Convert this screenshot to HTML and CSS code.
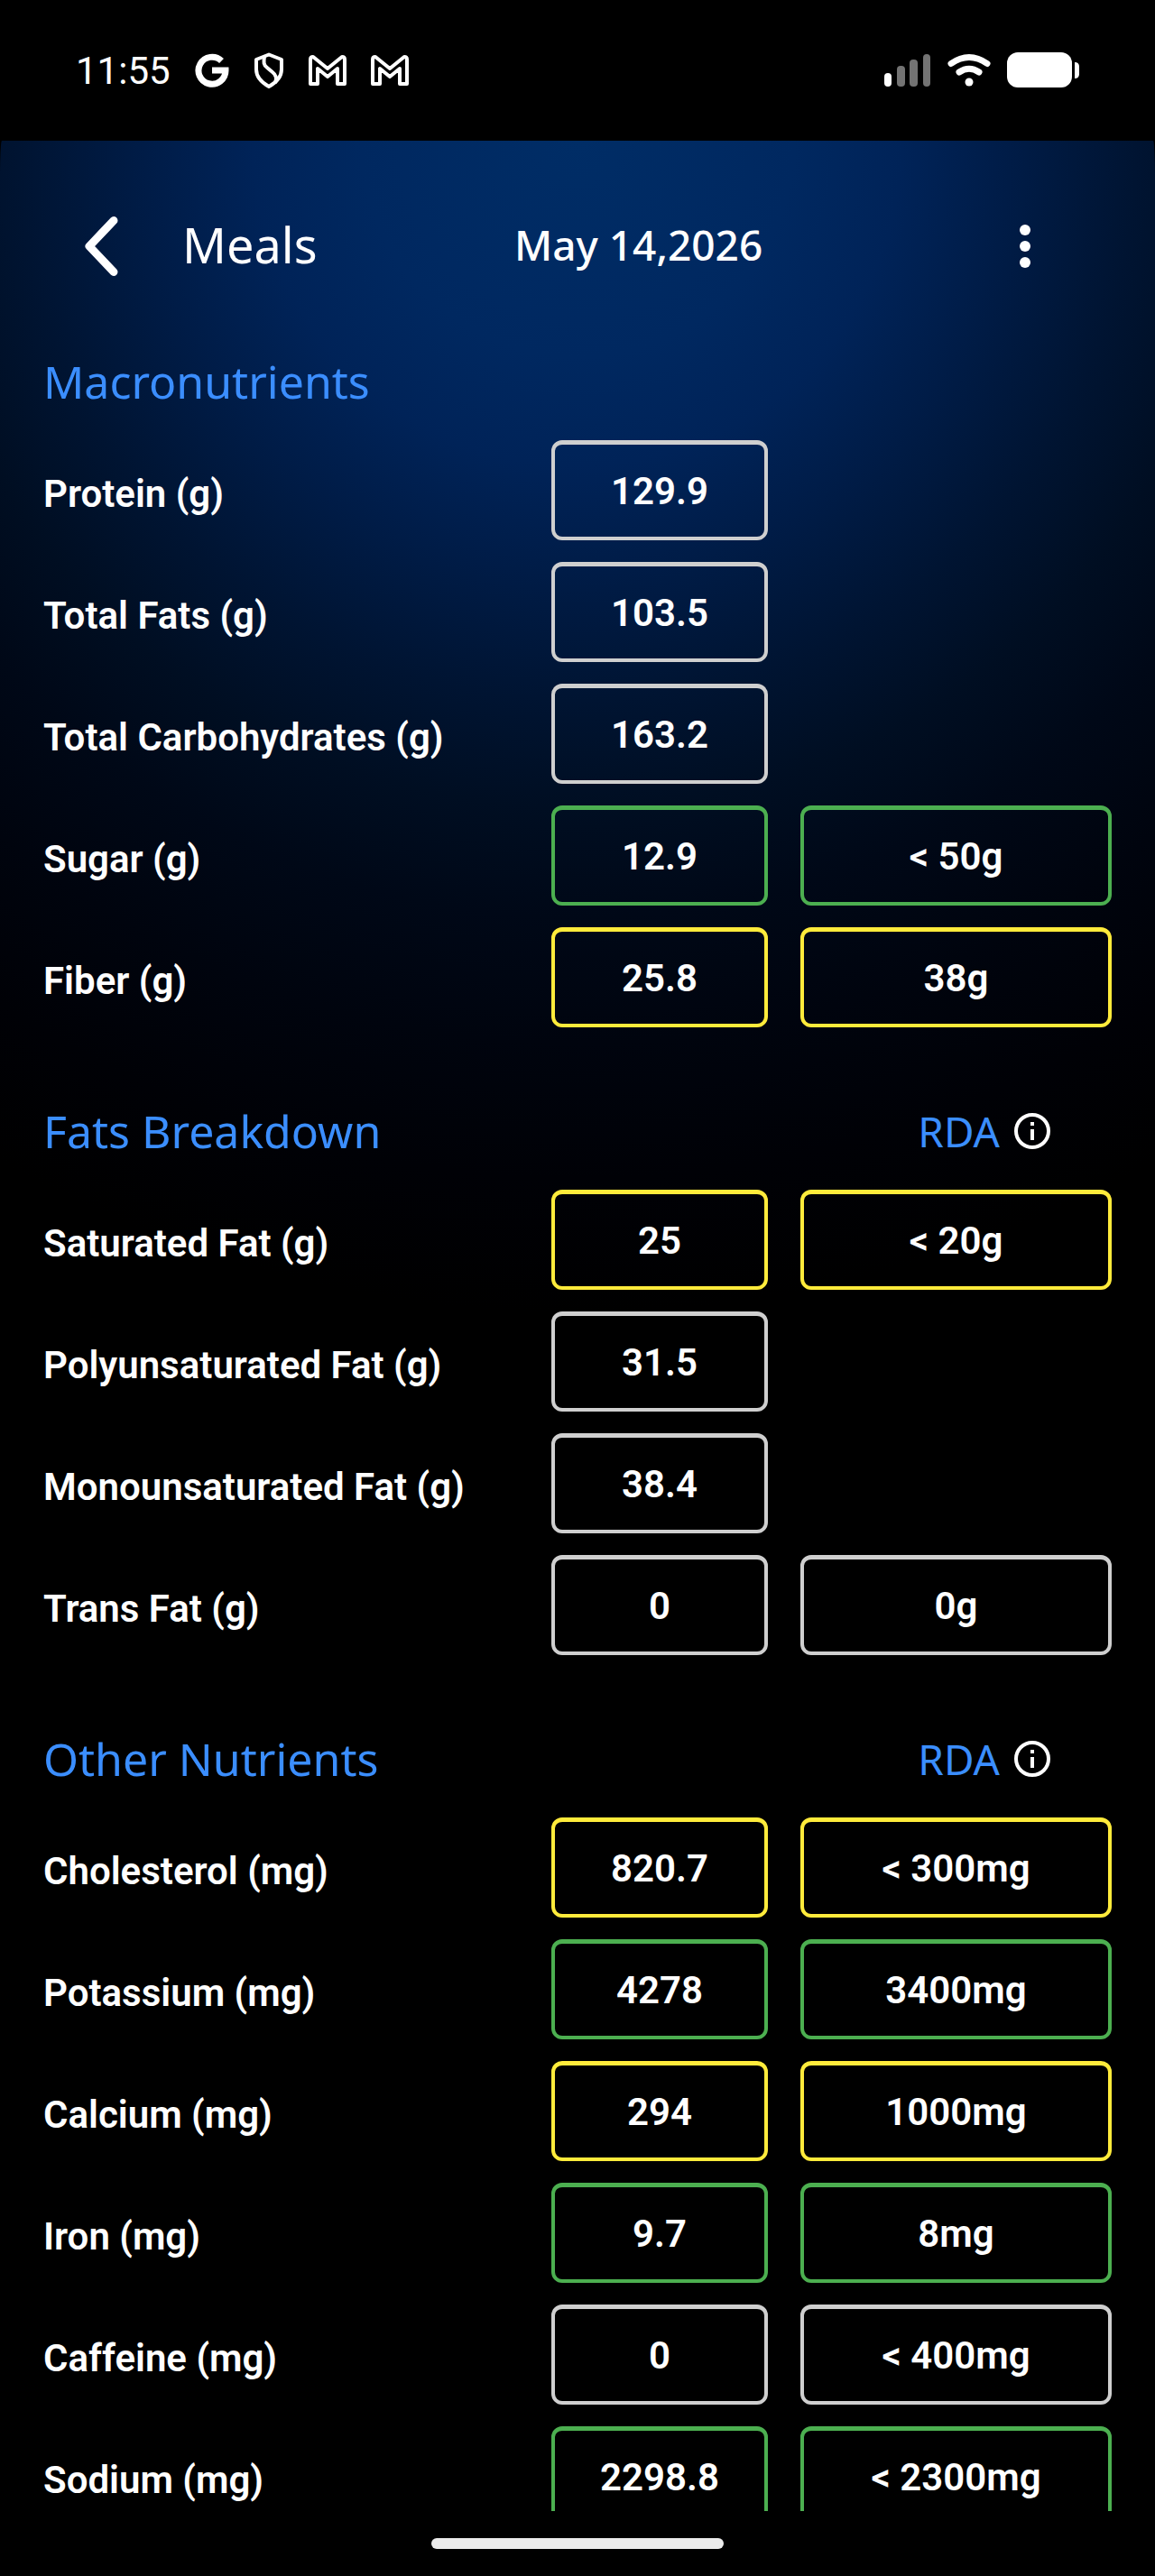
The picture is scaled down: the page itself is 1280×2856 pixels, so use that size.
FILE: index.html
```html
<!DOCTYPE html>
<html lang="en">
<head>
    <meta charset="UTF-8">
    <meta name="viewport" content="width=device-width, initial-scale=1.0">
    <title>Meals</title>
    <link rel="stylesheet" href="styles.css">
</head>
<body>
    <div class="status-bar">
        <div class="status-left">
            <span class="clock">11:55</span>
            <svg width="38" height="38" viewBox="0 0 38 38" fill="none" stroke="#fff" stroke-width="7">
                <path d="M29.5 8.5A15 15 0 1 0 34 19H19"/>
            </svg>
            <svg width="34" height="40" viewBox="0 0 34 40" fill="none" stroke="#fff" stroke-width="4" stroke-linejoin="round">
                <path d="M17 2.500L31 8v11c0 8-6 14.500-14 19C9 33.500 3 27 3 19V8z"/>
                <path d="M12 5c-1 6-1 9 3 12l6 5c4 3 5 7 3 12"/>
            </svg>
            <svg width="42" height="34" viewBox="0 0 42 34" fill="none" stroke="#fff" stroke-width="4" stroke-linejoin="round">
                <path d="M2 5q0-3 3-3l16 13L37 2q3 0 3 3v27h-8V15l-11 9-11-9v17H2z"/>
            </svg>
            <svg width="42" height="34" viewBox="0 0 42 34" fill="none" stroke="#fff" stroke-width="4" stroke-linejoin="round">
                <path d="M2 5q0-3 3-3l16 13L37 2q3 0 3 3v27h-8V15l-11 9-11-9v17H2z"/>
            </svg>
        </div>
        <div class="status-right">
            <svg width="52" height="40" viewBox="0 0 52 40" fill="#737373">
                <rect x="0" y="23" width="8" height="15" rx="4" fill="#fff"/>
                <rect x="14" y="15" width="9" height="23" rx="4"/>
                <rect x="28" y="8" width="9" height="30" rx="4"/>
                <rect x="43" y="2" width="8" height="36" rx="4"/>
            </svg>
            <svg width="48" height="40" viewBox="0 0 48 40" fill="none" stroke="#fff" stroke-width="7" stroke-linecap="round">
                <path d="M4 12.500Q24-1.500 44 12.500"/>
                <path d="M13 22q11-7.500 22 0"/>
                <circle cx="24" cy="33" r="4.500" fill="#fff" stroke="none"/>
            </svg>
            <svg width="80" height="40" viewBox="0 0 80 40" fill="#fff">
                <rect x="0" y="0" width="72" height="39" rx="12"/>
                <path d="M75 11q5 0 5 5v8q0 5-5 5z"/>
            </svg>
        </div>
    </div>

    <div class="app">
        <header>
            <button class="icon-btn" aria-label="Back">
                <svg width="40" height="68" viewBox="0 0 40 68" fill="none" stroke="#fff" stroke-width="9" stroke-linecap="round" stroke-linejoin="round">
                    <path d="M34 5.500L7 34l27 28.500"/>
                </svg>
            </button>
            <h1>Meals</h1>
            <span class="date">May 14,2026</span>
            <button class="icon-btn" aria-label="Menu">
                <svg width="12" height="48" viewBox="0 0 12 48" fill="#fff">
                    <circle cx="6" cy="6" r="6"/>
                    <circle cx="6" cy="24" r="6"/>
                    <circle cx="6" cy="42" r="6"/>
                </svg>
            </button>
        </header>

        <main>
            <section>
                <div class="section-head">
                    <h2>Macronutrients</h2>
                </div>
                <table>
                    <tr>
                        <th scope="row">Protein (g)</th>
                        <td class="value"><div class="box">129.9</div></td>
                        <td class="rda"></td>
                    </tr>
                    <tr>
                        <th scope="row">Total Fats (g)</th>
                        <td class="value"><div class="box">103.5</div></td>
                        <td class="rda"></td>
                    </tr>
                    <tr>
                        <th scope="row">Total Carbohydrates (g)</th>
                        <td class="value"><div class="box">163.2</div></td>
                        <td class="rda"></td>
                    </tr>
                    <tr class="good">
                        <th scope="row">Sugar (g)</th>
                        <td class="value"><div class="box">12.9</div></td>
                        <td class="rda"><div class="box">&lt; 50g</div></td>
                    </tr>
                    <tr class="warn">
                        <th scope="row">Fiber (g)</th>
                        <td class="value"><div class="box">25.8</div></td>
                        <td class="rda"><div class="box">38g</div></td>
                    </tr>
                </table>
            </section>

            <section>
                <div class="section-head">
                    <h2>Fats Breakdown</h2>
                    <button class="rda-btn">
                        RDA
                        <svg width="40" height="40" viewBox="0 0 40 40" fill="none" stroke="#fff" stroke-width="4">
                            <circle cx="20" cy="20" r="18"/>
                            <path d="M20 10v4M20 18v12"/>
                        </svg>
                    </button>
                </div>
                <table>
                    <tr class="warn">
                        <th scope="row">Saturated Fat (g)</th>
                        <td class="value"><div class="box">25</div></td>
                        <td class="rda"><div class="box">&lt; 20g</div></td>
                    </tr>
                    <tr>
                        <th scope="row">Polyunsaturated Fat (g)</th>
                        <td class="value"><div class="box">31.5</div></td>
                        <td class="rda"></td>
                    </tr>
                    <tr>
                        <th scope="row">Monounsaturated Fat (g)</th>
                        <td class="value"><div class="box">38.4</div></td>
                        <td class="rda"></td>
                    </tr>
                    <tr>
                        <th scope="row">Trans Fat (g)</th>
                        <td class="value"><div class="box">0</div></td>
                        <td class="rda"><div class="box">0g</div></td>
                    </tr>
                </table>
            </section>

            <section>
                <div class="section-head">
                    <h2>Other Nutrients</h2>
                    <button class="rda-btn">
                        RDA
                        <svg width="40" height="40" viewBox="0 0 40 40" fill="none" stroke="#fff" stroke-width="4">
                            <circle cx="20" cy="20" r="18"/>
                            <path d="M20 10v4M20 18v12"/>
                        </svg>
                    </button>
                </div>
                <table>
                    <tr class="warn">
                        <th scope="row">Cholesterol (mg)</th>
                        <td class="value"><div class="box">820.7</div></td>
                        <td class="rda"><div class="box">&lt; 300mg</div></td>
                    </tr>
                    <tr class="good">
                        <th scope="row">Potassium (mg)</th>
                        <td class="value"><div class="box">4278</div></td>
                        <td class="rda"><div class="box">3400mg</div></td>
                    </tr>
                    <tr class="warn">
                        <th scope="row">Calcium (mg)</th>
                        <td class="value"><div class="box">294</div></td>
                        <td class="rda"><div class="box">1000mg</div></td>
                    </tr>
                    <tr class="good">
                        <th scope="row">Iron (mg)</th>
                        <td class="value"><div class="box">9.7</div></td>
                        <td class="rda"><div class="box">8mg</div></td>
                    </tr>
                    <tr>
                        <th scope="row">Caffeine (mg)</th>
                        <td class="value"><div class="box">0</div></td>
                        <td class="rda"><div class="box">&lt; 400mg</div></td>
                    </tr>
                    <tr class="good">
                        <th scope="row">Sodium (mg)</th>
                        <td class="value"><div class="box">2298.8</div></td>
                        <td class="rda"><div class="box">&lt; 2300mg</div></td>
                    </tr>
                </table>
            </section>
        </main>
    </div>

    <div class="nav-bar">
        <div class="home-pill"></div>
    </div>
</body>
</html>
```
FILE: styles.css
```css
* {
    box-sizing: border-box;
}

body {
    margin: 0;
    height: 100vh;
    display: flex;
    flex-direction: column;
    background: #000;
    color: #fff;
    font-family: Roboto, sans-serif;
    font-size: 42px;
}

svg {
    display: block;
    flex-shrink: 0;
}

/* Status bar */
.status-bar {
    flex-shrink: 0;
    height: 156px;
    padding: 0 84px;
    display: flex;
    justify-content: space-between;
    align-items: center;
}

.status-left {
    display: flex;
    align-items: center;
    gap: 27px;
}

.status-right {
    display: flex;
    align-items: center;
    gap: 18px;
}

/* App */
.app {
    flex: 1;
    min-height: 0;
    display: flex;
    flex-direction: column;
    border-radius: 2px 2px 0 0 / 40px 40px 0 0;
    background: radial-gradient(circle at 50% 0, #002d66 0, #002860 240px, #002358 360px, #001c47 480px, #001432 620px, #000e22 740px, #000817 860px, #00040e 1000px, #000106 1150px, #000 1300px);
}

header {
    flex-shrink: 0;
    height: 234px;
    padding: 0 138px 0 92px;
    display: grid;
    grid-template-columns: 110px 368px 1fr auto;
    align-items: center;
    font-family: "Noto Sans", sans-serif;
}

h1 {
    margin: 0;
    padding-bottom: 4px;
    font-size: 54px;
    font-weight: 400;
    line-height: 72px;
}

.date {
    padding-bottom: 4px;
    font-size: 46px;
    font-weight: 500;
}

.icon-btn {
    padding: 0;
    border: none;
    background: none;
    cursor: pointer;
}

main {
    flex: 1;
    min-height: 0;
    padding: 0 48px;
    overflow-y: auto;
    scrollbar-width: none;
}

section {
    margin-bottom: 58px;
}

.section-head {
    height: 66px;
    margin-bottom: 32px;
    padding-right: 68px;
    display: flex;
    justify-content: space-between;
    align-items: center;
    font-family: "Noto Sans", sans-serif;
    color: #3b8eff;
}

h2 {
    margin: 0;
    font-size: 50px;
    font-weight: 400;
    line-height: 66px;
}

.rda-btn {
    padding: 0;
    border: none;
    background: none;
    color: inherit;
    font-family: inherit;
    font-size: 46px;
    line-height: 66px;
    display: flex;
    align-items: center;
    gap: 16px;
    cursor: pointer;
}

/* Nutrient tables */
table {
    width: 100%;
    table-layout: fixed;
    border-collapse: collapse;
}

th {
    padding: 8px 0 24px;
    text-align: left;
    font-weight: 600;
}

td {
    padding: 0 0 24px;
}

.value {
    width: 240px;
}

.rda {
    width: 381px;
    padding-left: 36px;
}

.box {
    height: 111px;
    display: flex;
    justify-content: center;
    align-items: center;
    border: 4px solid #cfcfcf;
    border-top-width: 5px;
    border-radius: 12px;
    font-weight: 600;
}

.good .box {
    border-color: #4caf50;
}

.warn .box {
    border-color: #ffeb3b;
}

/* Home gesture bar */
.nav-bar {
    flex-shrink: 0;
    height: 72px;
    display: flex;
    justify-content: center;
    align-items: center;
}

.home-pill {
    width: 324px;
    height: 12px;
    border-radius: 6px;
    background: #ebebeb;
}
```
